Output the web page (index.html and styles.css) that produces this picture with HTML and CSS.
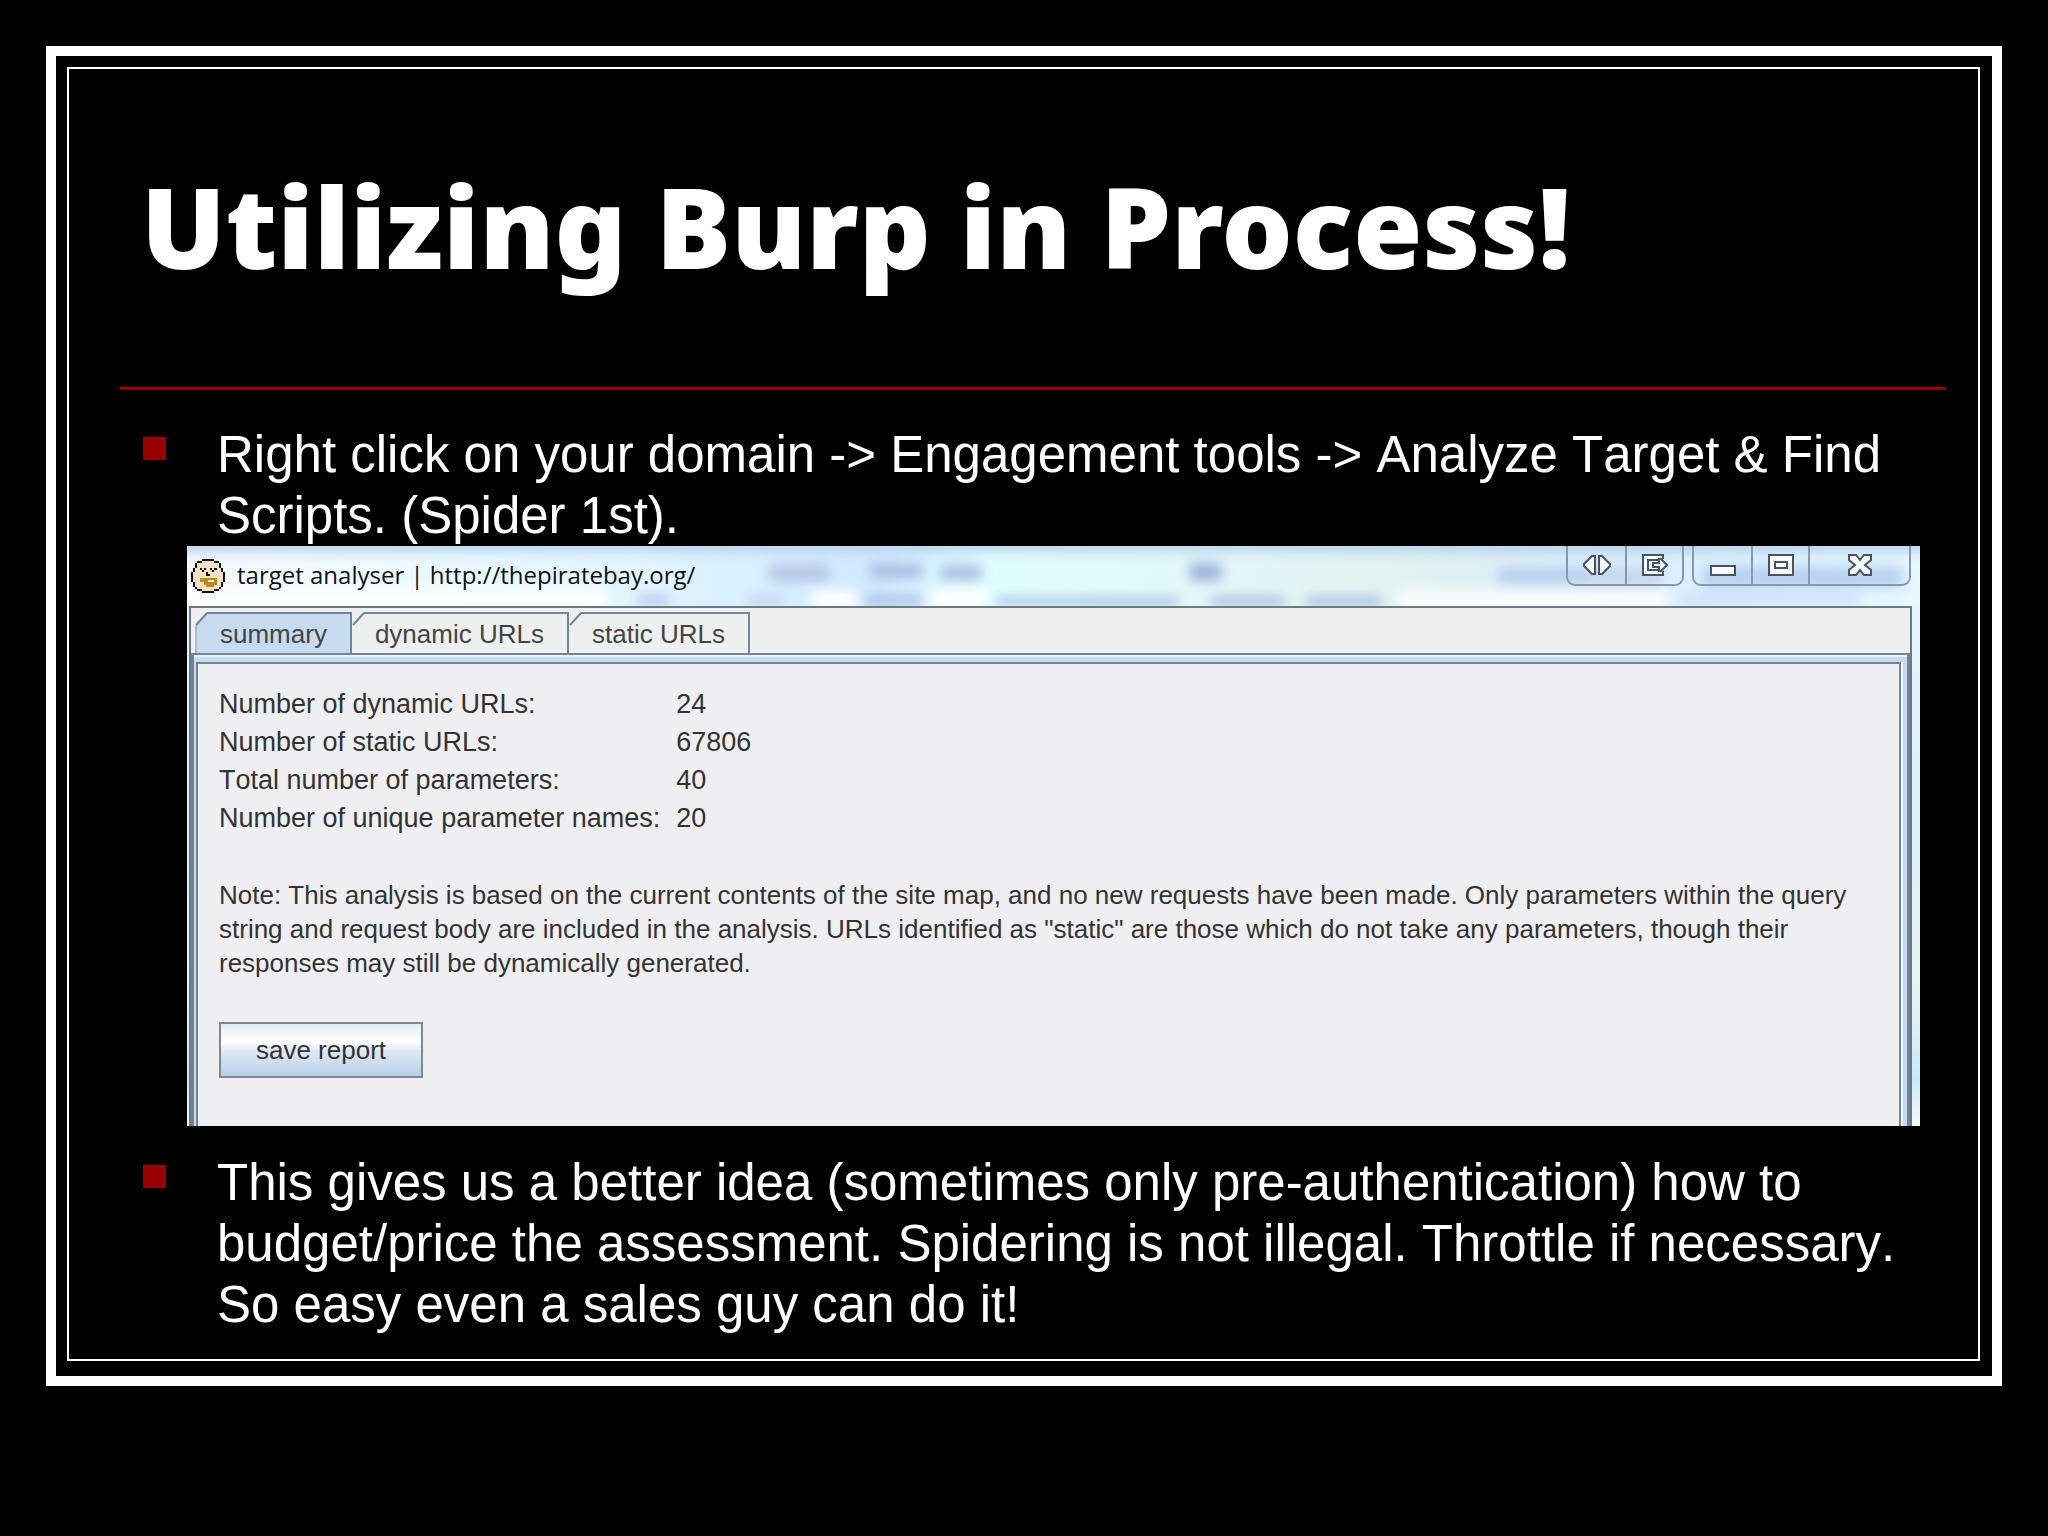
FILE: index.html
```html
<!DOCTYPE html>
<html lang="en">
<head>
<meta charset="utf-8">
<title>Utilizing Burp in Process!</title>
<link rel="stylesheet" href="styles.css">
</head>
<body>
<main class="slide">
  <div class="slide-inner">
    <h1 class="title">Utilizing Burp in Process!</h1>
    <ul class="points">
      <li class="point">Right click on your domain -&gt; Engagement tools -&gt; Analyze Target &amp; Find Scripts. (Spider 1st).</li>
      <li class="figure">
        <section class="window" aria-label="target analyser">
          <header class="titlebar">
            <svg class="glass" viewBox="0 0 1732 60" preserveAspectRatio="none" aria-hidden="true">
              <defs>
                <linearGradient id="sky" x1="0" x2="1" y1="0" y2="0">
                  <stop offset="0" stop-color="#f6f9fd"/><stop offset=".1" stop-color="#eefaff"/><stop offset=".25" stop-color="#e2f6ff"/><stop offset=".4" stop-color="#cfe9ff"/><stop offset=".46" stop-color="#e0feff"/><stop offset=".6" stop-color="#e2f6f8"/><stop offset=".7" stop-color="#e2f2f0"/><stop offset=".8" stop-color="#d6ecfa"/><stop offset="1" stop-color="#e6f8ff"/>
                </linearGradient>
                <filter id="soft" x="-5%" y="-50%" width="110%" height="200%"><feGaussianBlur stdDeviation="6"/></filter>
              </defs>
              <rect width="1732" height="60" fill="url(#sky)"/>
              <g filter="url(#soft)">
                <rect x="-20" y="-8" width="1780" height="14" fill="#b9d2ea"/>
                <rect x="-20" y="44" width="440" height="20" fill="#fff"/>
                <rect x="624" y="44" width="46" height="20" fill="#fff"/>
                <rect x="742" y="44" width="56" height="20" fill="#fff"/>
                <rect x="1210" y="44" width="270" height="20" fill="#fbfbfb"/>
                <rect x="582" y="18" width="60" height="18" fill="#b8c8e6"/>
                <rect x="683" y="18" width="52" height="14" fill="#a8bce0"/>
                <rect x="753" y="19" width="42" height="15" fill="#aabfe2"/>
                <rect x="1002" y="17" width="32" height="18" fill="#9fb5dc"/>
                <rect x="1310" y="22" width="100" height="16" fill="#b9d0ee"/>
                <rect x="1400" y="22" width="74" height="18" fill="#c3d6ee"/>
                <rect x="1515" y="20" width="200" height="22" fill="#b9d2f0"/>
                <rect x="450" y="50" width="32" height="8" fill="#aebfe2"/>
                <rect x="560" y="50" width="36" height="8" fill="#bfd0ec"/>
                <rect x="677" y="50" width="58" height="9" fill="#a9bbe0"/>
                <rect x="808" y="51" width="184" height="9" fill="#abc5e4"/>
                <rect x="1023" y="51" width="74" height="9" fill="#a5bbdc"/>
                <rect x="1119" y="51" width="74" height="9" fill="#a5bbdc"/>
                <rect x="1494" y="50" width="180" height="8" fill="#c6dcf6"/>
              </g>
            </svg>
            <svg class="face" viewBox="0 0 16 16" preserveAspectRatio="none" shape-rendering="crispEdges" aria-hidden="true">
              <path fill="#f5e2c8" d="M5 1h6v1h2v2h1v2h1v5h-1v2h-2v2H5v-1H3v-2H2v-2H1V6h1V4h1V2h2z"/>
              <path fill="#111" d="M5 0h6v1H5zM3 1h2v1H3zM11 1h2v1h-2zM2 2h1v2H2zM13 2h1v2h-1zM1 4h1v2H1zM14 4h1v2h-1zM0 6h1v5H0zM15 6h1v5h-1zM1 11h1v2H1zM14 11h1v2h-1zM2 13h1v1H2zM13 13h1v1h-1zM3 14h2v1H3zM11 14h2v1h-2zM5 15h6v1H5zM4 4h1v1H4zM5 5h1v1H5zM6 4h1v1H6zM9 4h1v1H9zM10 5h1v1h-1zM11 4h1v1h-1zM7 6h1v2H7zM8 7h1v1H8z"/>
              <path fill="#b98a1c" d="M4 9h8v3h-1v1H7v-1H6v-1H4z"/><path fill="#fff3cf" d="M8 10h3v1H8z"/>
            </svg>
            <h2 class="caption">target analyser | http://thepiratebay.org/</h2>
            <div class="controls">
              <div class="group">
                <button class="ctl" type="button" aria-label="Resize"><svg width="30" height="22" viewBox="0 0 30 22"><path d="M13 2v18h-3l-8-8v-2l8-8zM17 2v18h3l8-8v-2l-8-8z"/></svg></button>
                <button class="ctl" type="button" aria-label="Detach"><svg width="28" height="24" viewBox="0 0 28 24"><path d="M2 2h20v5l5 5-5 5v5H2z" stroke="none"/><path d="M22 6V2H2v20h20v-4" fill="none"/><path d="M18 7H7v10h11v-3h-6v-4h6V6h2l6 6-6 6h-2v-4"/></svg></button>
              </div>
              <div class="group">
                <button class="ctl" type="button" aria-label="Minimize"><svg width="28" height="24" viewBox="0 0 28 24"><path d="M2 13h24v9H2z"/></svg></button>
                <button class="ctl" type="button" aria-label="Maximize"><svg width="28" height="24" viewBox="0 0 28 24"><path d="M2 2h24v20H2z"/><path d="M8 9h12v6H8z"/></svg></button>
                <button class="ctl close" type="button" aria-label="Close"><svg width="28" height="24" viewBox="0 0 28 24"><path d="M3 2h7l4 5 4-5h7v5l-6 5 6 5v5h-7l-4-5-4 5H3v-5l6-5-6-5z"/></svg></button>
              </div>
            </div>
          </header>
          <div class="client">
            <div class="tabs" role="tablist">
              <button class="tab selected" type="button" role="tab" aria-selected="true"><svg class="corner" viewBox="0 0 12 14"><path class="cut" d="M0 0h12L0 14z"/><path class="edge" d="M12 1L1 13"/></svg>summary</button>
              <button class="tab" type="button" role="tab" aria-selected="false"><svg class="corner" viewBox="0 0 12 14"><path class="cut" d="M0 0h12L0 14z"/><path class="edge" d="M12 1L1 13"/></svg>dynamic URLs</button>
              <button class="tab" type="button" role="tab" aria-selected="false"><svg class="corner" viewBox="0 0 12 14"><path class="cut" d="M0 0h12L0 14z"/><path class="edge" d="M12 1L1 13"/></svg>static URLs</button>
            </div>
            <div class="pane">
              <div class="pane-body">
                <table class="stats">
                  <tr><th scope="row">Number of dynamic URLs:</th><td>24</td></tr>
                  <tr><th scope="row">Number of static URLs:</th><td>67806</td></tr>
                  <tr><th scope="row">Total number of parameters:</th><td>40</td></tr>
                  <tr><th scope="row">Number of unique parameter names:</th><td>20</td></tr>
                </table>
                <p class="note">Note: This analysis is based on the current contents of the site map, and no new requests have been made. Only parameters within the query<br>string and request body are included in the analysis. URLs identified as "static" are those which do not take any parameters, though their<br>responses may still be dynamically generated.</p>
                <button class="save" type="button">save report</button>
              </div>
            </div>
          </div>
        </section>
      </li>
      <li class="point">This gives us a better idea (sometimes only pre-authentication) how to budget/price the assessment. Spidering is not illegal. Throttle if necessary. So easy even a sales guy can do it!</li>
    </ul>
  </div>
</main>
</body>
</html>
```
FILE: styles.css
```css
* { box-sizing: border-box; }

body {
  margin: 0;
  padding: 46px;
  background: #000;
  color: #fff;
  font-family: "Liberation Sans", Arial, sans-serif;
  font-kerning: none;
}

.slide {
  border: 10px solid #fff;
  padding: 11px 12px 15px 11px;
}

.slide-inner {
  border: 2px solid #fff;
  padding: 77px 32px 24px 51px;
}

.title {
  margin: 0;
  padding: 0 21px 81px;
  border-bottom: 3px solid #900;
  font: 900 112px/160px "Noto Sans", "Open Sans", sans-serif;
}

.points {
  list-style: none;
  margin: 0;
  padding: 34px 0 0 23px;
}

.point {
  position: relative;
  padding-left: 74px;
  font-size: 51px;
  line-height: 61px;
}

.point::before {
  content: "";
  position: absolute;
  left: 0;
  top: 13px;
  width: 23px;
  height: 23px;
  background: #900;
}

.figure { padding: 0 26px 26px 44px; }

.window {
  background: linear-gradient(#e6f8ff, #d8f0fa 50%, #e8f4f4 75%, #c6eafa 92%, #f6f8f6);
  color: #333;
}

.titlebar {
  position: relative;
  display: flex;
  align-items: flex-start;
  height: 60px;
  padding: 0 9px 0 4px;
}

.glass { position: absolute; inset: 0; width: 100%; height: 100%; }

.face { position: relative; width: 34px; height: 34px; margin-top: 13px; }

.caption {
  position: relative;
  flex: 1;
  margin: 0;
  padding-left: 12px;
  color: #111;
  font: 400 24px/58px "Open Sans", "Noto Sans", sans-serif;
}

.controls { position: relative; display: flex; gap: 8px; }

.group {
  display: flex;
  height: 40px;
  border: 2px solid #8799a8;
  border-top: 0;
  border-radius: 0 0 9px 9px;
}

.ctl {
  display: flex;
  justify-content: center;
  align-items: center;
  width: 57px;
  padding: 0;
  border: 0;
  background: none;
}

.ctl + .ctl { border-left: 2px solid #8799a8; }
.group .close { width: 101px; }
.ctl svg { fill: #f6f8fa; stroke: #4a5360; stroke-width: 2; }

.client {
  margin: 0 8px 0 2px;
  border: 2px solid #6d7880;
  border-width: 2px 2px 0;
  background: #eeefef;
}

.tabs {
  display: flex;
  height: 45px;
  padding: 4px 0 0 4px;
}

.tab {
  position: relative;
  height: 41px;
  margin: 0;
  padding: 0 23px;
  border: 2px solid #74839a;
  border-left: 0;
  border-bottom: 0;
  background: #eeefef;
  color: #444;
  font: 26px/34px "Liberation Sans", Arial, sans-serif;
}

.tab.selected { border-left: 2px solid #a9bbd0; background: #c6daf0; }

.corner { position: absolute; left: 0; top: -2px; width: 12px; height: 14px; }
.selected .corner { left: -2px; }
.cut { fill: #eeefef; }
.edge { fill: none; stroke: #74839a; stroke-width: 2; }

.pane {
  padding: 7px 6px 0 2px;
  border: 3px solid #74839a;
  border-width: 2px 3px 0;
  background: #c8dbee;
  box-shadow: inset 0 2px #f0f7fc;
}

.pane-body {
  padding: 21px 20px 48px 21px;
  border: 2px solid #74839a;
  border-bottom: 0;
  background: #efeef0;
  box-shadow: 2px 0 #f0f7fc;
}

.stats { border-collapse: collapse; font-size: 27px; line-height: 38px; }
.stats th { padding: 0 16px 0 0; font-weight: 400; text-align: left; }
.stats td { padding: 0; }

.note { margin: 41px 0 42px; font-size: 26px; line-height: 34px; }

.save {
  width: 204px;
  height: 56px;
  padding: 0;
  border: 2px solid #7b8794;
  background: linear-gradient(#e2ecf6, #fff 35%, #dfe9f4 50%, #b9d0e6);
  color: #333;
  font: 26px "Liberation Sans", Arial, sans-serif;
}
```
